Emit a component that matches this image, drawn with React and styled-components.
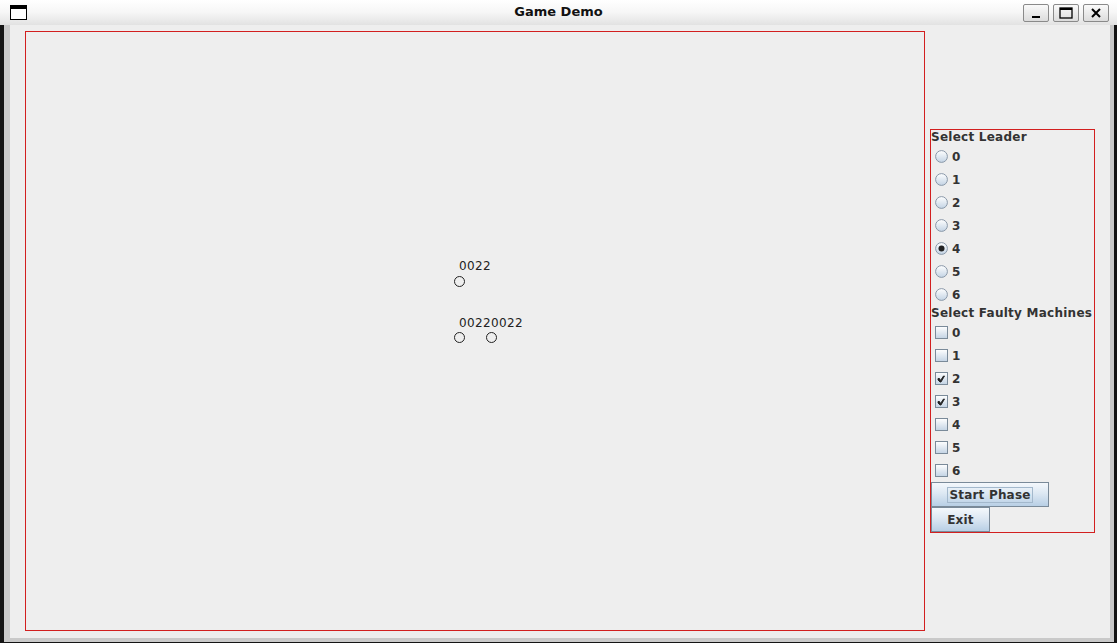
import React from "react";
import styled, { createGlobalStyle } from "styled-components";

const Global = createGlobalStyle`
  html, body { margin: 0; padding: 0; background: #141414; }
  body { font-family: "DejaVu Sans", sans-serif; overflow: hidden; }
`;

const Frame = styled.div`
  width: 1117px;
  height: 643px;
  display: flex;
  flex-direction: column;
`;

const TitleBar = styled.div`
  height: 25px;
  flex: none;
  display: flex;
  align-items: center;
  position: relative;
  background: linear-gradient(#ffffff 0%, #f6f6f6 50%, #e2e2e2 100%);
`;

const AppIcon = styled.svg`
  margin-left: 10px;
  width: 17px;
  height: 15px;
`;

const Title = styled.div`
  position: absolute;
  left: 0;
  right: 0;
  top: 4px;
  text-align: center;
  font: bold 13px "DejaVu Sans", sans-serif;
  color: #111;
  pointer-events: none;
`;

const WinButtons = styled.div`
  margin-left: auto;
  margin-right: 8px;
  display: flex;
  gap: 4px;
`;

const WinButton = styled.div`
  width: 26px;
  height: 18px;
  box-sizing: border-box;
  border: 1px solid #8a8a8a;
  border-radius: 2px;
  background: linear-gradient(#fafafa, #dcdcdc);
  display: flex;
  align-items: center;
  justify-content: center;
`;

const BodyWrap = styled.div`
  flex: 1;
  display: flex;
  padding: 0 3px 1px 4px;
`;

const Body = styled.div`
  flex: 1;
  background: #eeeeee;
  border-left: 6px solid #c9c9c9;
  border-right: 4px solid #c9c9c9;
  border-bottom: 4px solid #c9c9c9;
  display: flex;
  align-items: center;
  padding: 0 0 0 15px;
`;

const Canvas = styled.div`
  width: 900px;
  height: 600px;
  box-sizing: border-box;
  border: 1px solid #d21f1f;
  position: relative;
  flex: none;
  align-self: flex-start;
  margin-top: 6px;
  margin-right: 5px;
`;

const NodeLabel = styled.div`
  position: absolute;
  font: 12px/14px "DejaVu Sans", sans-serif;
  letter-spacing: 0.35px;
  color: #222;
  white-space: nowrap;
`;

const Node = styled.div`
  position: absolute;
  width: 11px;
  height: 11px;
  box-sizing: border-box;
  border: 1px solid #222;
  border-radius: 50%;
`;

const Side = styled.div`
  width: 165px;
  height: 404px;
  box-sizing: border-box;
  border: 1px solid #d21f1f;
  display: flex;
  flex-direction: column;
  flex: none;
  margin-top: -1px;
`;

const SectionLabel = styled.div`
  height: 15px;
  font: bold 12px/15px "DejaVu Sans", sans-serif;
  letter-spacing: 0.25px;
  color: #333;
  white-space: nowrap;
`;

const OptRow = styled.div`
  height: 23px;
  display: flex;
  align-items: center;
  padding-left: 4px;
  gap: 4px;
  font: bold 12px "DejaVu Sans", sans-serif;
  color: #333;
`;

const ActionButton = styled.div`
  width: ${(p) => p.$w}px;
  height: 25px;
  box-sizing: border-box;
  border: 1px solid #7a8a99;
  background: linear-gradient(#f4f8fc 0%, #dde8f3 45%, #b8cfe5 100%);
  display: flex;
  align-items: center;
  justify-content: center;
  font: bold 12px "DejaVu Sans", sans-serif;
  letter-spacing: 0.2px;
  color: #333;
`;

const FocusRing = styled.span`
  border: 1px solid #a3b8cc;
  padding: 0 1px;
  line-height: 14px;
`;

function Radio({ checked }) {
  return (
    <svg width="13" height="13" viewBox="0 0 13 13">
      <defs>
        <linearGradient id="rg" x1="0" y1="0" x2="0" y2="1">
          <stop offset="0" stopColor="#ffffff" />
          <stop offset="1" stopColor="#c3d3e4" />
        </linearGradient>
      </defs>
      <circle cx="6.5" cy="6.5" r="5.9" fill="url(#rg)" stroke="#8a98a8" strokeWidth="1" />
      {checked && <circle cx="6.5" cy="6.5" r="3" fill="#222" />}
    </svg>
  );
}

function Check({ checked }) {
  return (
    <svg width="13" height="13" viewBox="0 0 13 13">
      <defs>
        <linearGradient id="cg" x1="0" y1="0" x2="0" y2="1">
          <stop offset="0" stopColor="#ffffff" />
          <stop offset="1" stopColor="#c3d3e4" />
        </linearGradient>
      </defs>
      <rect x="0.5" y="0.5" width="12" height="12" fill="url(#cg)" stroke="#7a8a99" />
      {checked && (
        <path d="M3 6.5 L3 8 L5 10 L6 10 L9.5 4 L8.5 4 L5.5 8.5 L4.5 6.5 Z" fill="#222" stroke="#222" strokeWidth="0.9" strokeLinejoin="round" />
      )}
    </svg>
  );
}

const ids = [0, 1, 2, 3, 4, 5, 6];
const leader = 4;
const faulty = [2, 3];

export default function App() {
  return (
    <>
      <Global />
      <Frame>
        <TitleBar>
          <AppIcon viewBox="0 0 17 15">
            <rect x="0.5" y="0.5" width="16" height="14" fill="#fff" stroke="#000" />
            <rect x="0" y="0" width="17" height="4" fill="#000" />
          </AppIcon>
          <Title>Game Demo</Title>
          <WinButtons>
            <WinButton>
              <svg width="12" height="12" viewBox="0 0 12 12">
                <rect x="2" y="9" width="8" height="2" fill="#000" />
              </svg>
            </WinButton>
            <WinButton>
              <svg width="14" height="12" viewBox="0 0 14 12">
                <rect x="1" y="1" width="12" height="10" fill="none" stroke="#000" strokeWidth="1.3" />
                <rect x="1" y="1" width="12" height="2" fill="#000" />
              </svg>
            </WinButton>
            <WinButton>
              <svg width="12" height="12" viewBox="0 0 12 12">
                <path d="M2 2 L10 10 M10 2 L2 10" stroke="#000" strokeWidth="2" />
              </svg>
            </WinButton>
          </WinButtons>
        </TitleBar>
        <BodyWrap>
          <Body>
            <Canvas>
              <NodeLabel style={{ left: 433, top: 227 }}>0022</NodeLabel>
              <Node style={{ left: 428, top: 244 }} />
              <NodeLabel style={{ left: 433, top: 284 }}>00220022</NodeLabel>
              <Node style={{ left: 428, top: 300 }} />
              <Node style={{ left: 460, top: 300 }} />
            </Canvas>
            <Side>
              <SectionLabel>Select Leader</SectionLabel>
              {ids.map((i) => (
                <OptRow key={"r" + i}>
                  <Radio checked={i === leader} />
                  <span>{i}</span>
                </OptRow>
              ))}
              <SectionLabel>Select Faulty Machines</SectionLabel>
              {ids.map((i) => (
                <OptRow key={"c" + i}>
                  <Check checked={faulty.includes(i)} />
                  <span>{i}</span>
                </OptRow>
              ))}
              <ActionButton $w={118}>
                <FocusRing>Start Phase</FocusRing>
              </ActionButton>
              <ActionButton $w={59}>Exit</ActionButton>
            </Side>
          </Body>
        </BodyWrap>
      </Frame>
    </>
  );
}
